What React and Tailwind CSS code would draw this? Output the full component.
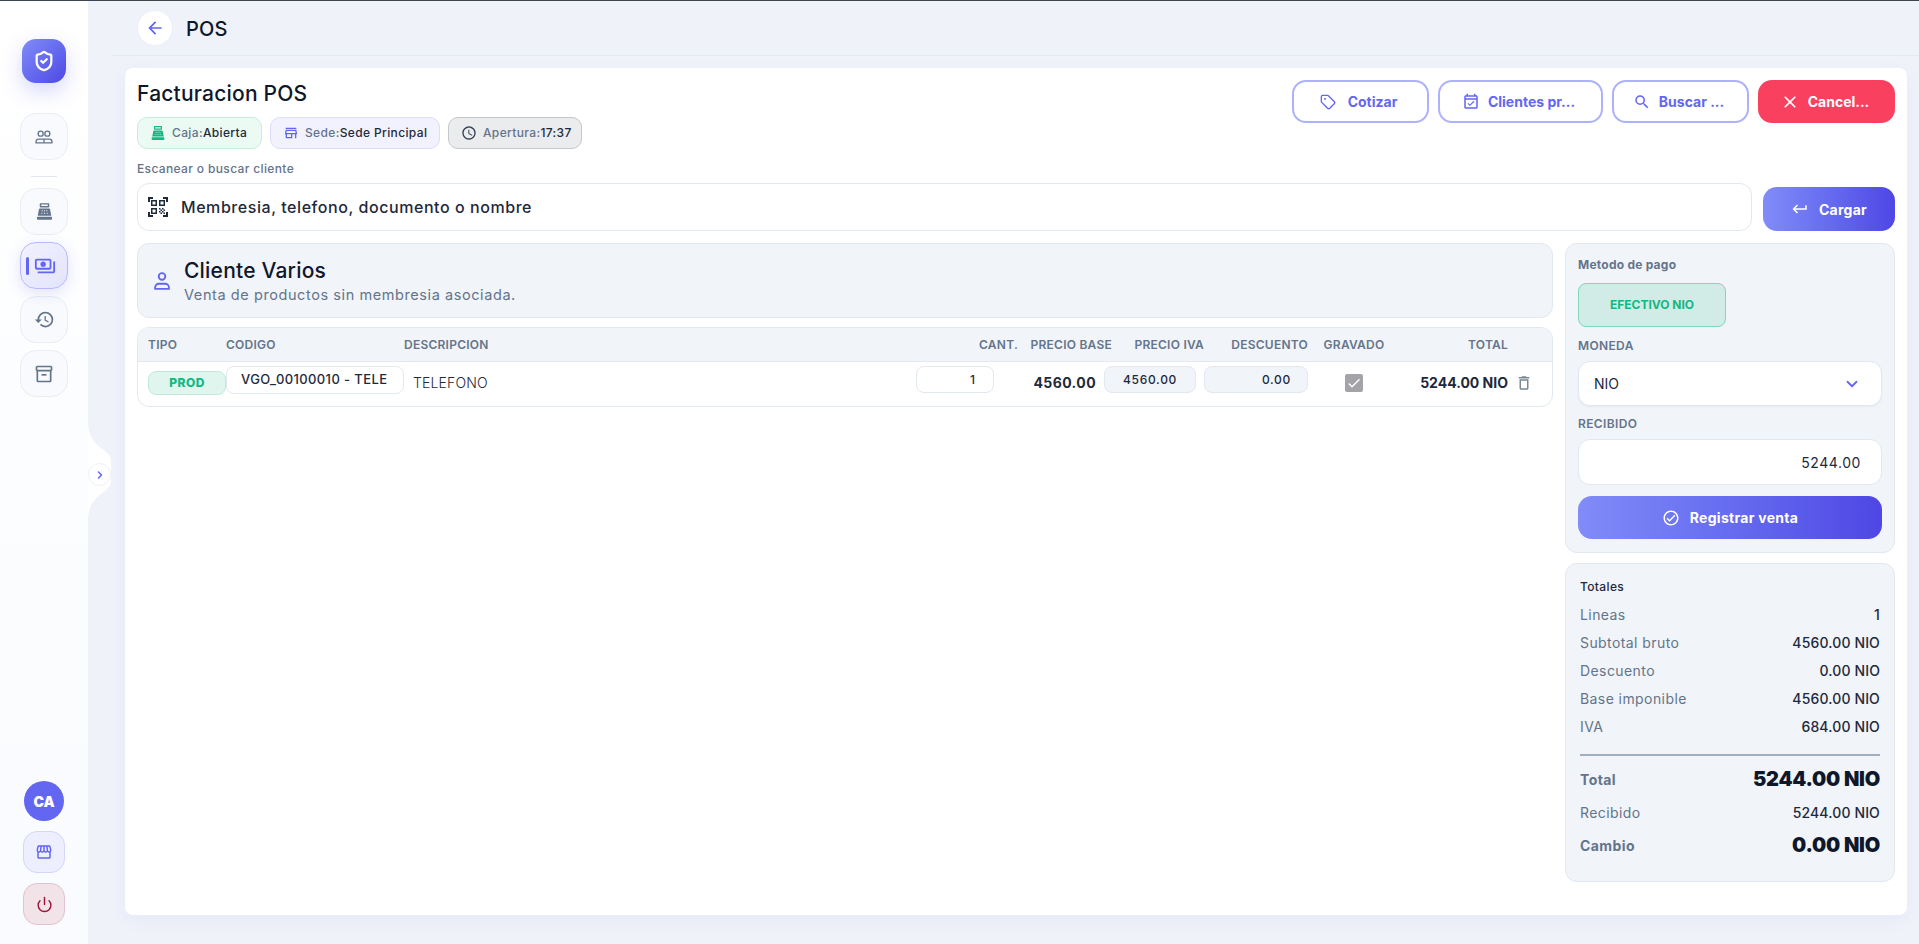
import React from 'react';
import {
  MdOutlinePayments, MdHistory, MdOutlineStorefront, MdOutlineQrCodeScanner, MdOutlineSchedule,
  MdOutlineEventAvailable, MdSearch, MdClose, MdKeyboardReturn, MdOutlineCheckCircleOutline,
  MdOutlineDelete, MdOutlineInventory2, MdOutlineStore, MdCheck, MdArrowBack,
} from 'react-icons/md';
import { LuChevronRight, LuChevronDown, LuPower, LuShieldCheck, LuTag } from 'react-icons/lu';

const UsersIcon = ({ className }) => (
  <svg viewBox="0 0 24 24" fill="none" stroke="currentColor" strokeWidth="1.6" className={className}>
    <circle cx="8" cy="8" r="3" />
    <circle cx="16" cy="8" r="3" />
    <path d="M2.5 19v-1.5a3 3 0 0 1 3-3h13a3 3 0 0 1 3 3V19z" />
    <path d="M12 14.5V19" />
  </svg>
);

const PersonIcon = ({ className }) => (
  <svg viewBox="0 0 24 24" fill="none" stroke="currentColor" strokeWidth="2" className={className}>
    <circle cx="12" cy="7" r="3.6" />
    <path d="M4.5 20.5v-1.5a4 4 0 0 1 4-4h7a4 4 0 0 1 4 4v1.5z" />
  </svg>
);

// cash register, filled body with small display on top
const RegisterIcon = ({ className }) => (
  <svg viewBox="0 0 24 24" fill="currentColor" className={className}>
    <path d="M7 1.5h10a1 1 0 0 1 1 1V6a1 1 0 0 1-1 1H7a1 1 0 0 1-1-1V2.5a1 1 0 0 1 1-1zm.8 1.8v1.9h8.4V3.3z" fillRule="evenodd" />
    <path fillRule="evenodd" d="M6 8.3h12a1 1 0 0 1 1 .8l1.6 8.2H3.4L5 9.100a1 1 0 0 1 1-.8zM8.500 10.500v1.300h1.300v-1.300zm2.900 0v1.300h1.300v-1.300zm2.900 0v1.300h1.300v-1.300zM8 13.500v1.300h1.300v-1.300zm3.300 0v1.300h1.400v-1.300zm3.400 0v1.300H16v-1.300z" />
    <rect x="2.500" y="18.500" width="19" height="4" rx="1" />
  </svg>
);

const navItem = "w-12 h-[47px] rounded-2xl border border-[#e9edf5] bg-[#f8fafd] flex items-center justify-center text-[#64748b]";

const Sidebar = () => (
  <aside className="relative z-10 w-[88px] shrink-0 bg-gradient-to-b from-white to-[#f9fbfe] flex flex-col items-center pt-[38px] pb-[19px]">
    <div className="w-11 h-11 rounded-[14px] bg-gradient-to-br from-[#818cf8] to-[#4f46e5] shadow-[0_8px_20px_rgba(99,102,241,0.25)] flex items-center justify-center text-white">
      <LuShieldCheck className="w-[22px] h-[22px]" strokeWidth={2.4} />
    </div>
    <div className={`${navItem} mt-[30px]`}><UsersIcon className="w-5 h-5" /></div>
    <div className="w-[26px] h-px bg-[#e2e8f0] mt-4 mb-[11px]" />
    <div className={navItem}><RegisterIcon className="w-[19px] h-[19px]" /></div>
    <div className="relative w-12 h-[47px] mt-[7px] rounded-2xl border border-[#b7b9fb] bg-gradient-to-br from-[#f1f1fe] to-[#e3e4fd] shadow-[0_4px_14px_rgba(99,102,241,0.18)] flex items-center justify-center text-[#6366f1]">
      <span className="absolute left-[5px] top-[14px] w-[3px] h-[18px] rounded bg-[#6366f1]" />
      <MdOutlinePayments className="w-[22px] h-[22px] ml-[1px]" />
    </div>
    <div className={`${navItem} mt-[7px]`}><MdHistory className="w-[21px] h-[21px]" /></div>
    <div className={`${navItem} mt-[7px]`}><MdOutlineInventory2 className="w-[20px] h-[20px]" /></div>
    <div className="mt-auto w-10 h-10 rounded-full bg-[#6366f1] text-white text-[14px] font-black flex items-center justify-center">CA</div>
    <div className="mt-[10px] w-[42px] h-[42px] rounded-[14px] border border-[#d5d6fb] bg-[#eeeffe] flex items-center justify-center text-[#6366f1]">
      <MdOutlineStorefront className="w-[18px] h-[18px]" />
    </div>
    <div className="mt-[10px] w-[42px] h-[42px] rounded-[14px] border border-[#e2c4cf] bg-[#f1e3e8] flex items-center justify-center text-[#9f1239]">
      <LuPower className="w-[17px] h-[17px]" />
    </div>
    {/* notch toggle */}
    <svg viewBox="0 0 24 100" className="absolute left-[88px] top-[420px] w-6 h-[100px]" fill="#fff">
      <path d="M0 0 C0 14 6 22 13 27 C20 32 23 35 23 40 V60 C23 65 20 68 13 73 C6 78 0 86 0 100z" />
    </svg>
    <div className="absolute left-[88px] top-[462px] w-[23px] h-[23px] rounded-full border border-[#eef0fb] bg-white flex items-center justify-center text-[#6366f1]">
      <LuChevronRight className="w-3 h-3" strokeWidth={3} />
    </div>
  </aside>
);

const Badge = ({ icon, label, value, className }) => (
  <div className={`h-8 pl-3 rounded-[10px] border flex items-center gap-[6px] text-[12px] font-medium tracking-[0.03em] ${className}`}>
    {icon}
    <span className="whitespace-nowrap"><span className="text-[#64748b]">{label}:</span><span className="text-[#1e293b]">{value}</span></span>
  </div>
);

const OutlineBtn = ({ icon, children, className }) => (
  <button className={`h-[43px] pr-1 rounded-[14px] border-2 border-[#aeb1fb] bg-white text-[#6366f1] text-[14px] font-bold flex items-center justify-center gap-2 ${className}`}>
    {icon}{children}
  </button>
);

const headCls = "text-[12px] font-semibold text-[#64748b] tracking-[0.02em]";
const tableCols = "grid grid-cols-[78px_178px_1fr_102px_94px_92px_104px_92px_108px_44px]";

const Totals = ({ label, value }) => (
  <div className="h-7 flex items-center justify-between text-[14px]">
    <span className="text-[#64748b] tracking-[0.03em]">{label}</span>
    <span className="text-[#1e293b] font-medium tracking-[0.01em]">{value}</span>
  </div>
);

const App = () => (
  <div className="h-[944px] w-full overflow-hidden flex bg-[#eff2f9] border-t border-t-[#3f4650] font-['Inter',sans-serif] text-[#0f172a]">
    <Sidebar />
    <main className="flex-1 min-w-0 pr-3 pl-[24px] relative">
      <header className="-mr-3 h-[55px] border-b border-[#e2e8f0] flex items-center pl-[25px]">
        <div className="w-9 h-9 rounded-full bg-white border border-[#eef0f6] flex items-center justify-center text-[#6366f1]">
          <MdArrowBack className="w-5 h-5" />
        </div>
        <h1 className="ml-[13px] pt-px text-[20px] font-medium tracking-[0.01em]">POS</h1>
      </header>

      <section className="mt-[12px] ml-[13px] h-[847px] rounded-lg bg-white shadow-[0_6px_18px_rgba(99,102,241,0.06)] px-3 pt-3">
        {/* top row */}
        <div className="flex justify-between">
          <div>
            <h2 className="mt-[1px] text-[21px] font-medium leading-[26px] tracking-[0.01em] text-[#0f172a]">Facturacion POS</h2>
            <div className="flex gap-2 mt-[10px]">
              <Badge className="w-[125px] border-[#c5eedd] bg-[#ecfaf4]" label="Caja" value="Abierta" icon={<RegisterIcon className="shrink-0 w-[16px] h-[16px] text-[#10b981]" />} />
              <Badge className="w-[170px] border-[#dcdcfb] bg-[#f2f2fe]" label="Sede" value="Sede Principal" icon={<MdOutlineStore className="shrink-0 w-4 h-4 text-[#6366f1]" />} />
              <Badge className="w-[134px] border-[#c4c7cc] bg-[#ebecee]" label="Apertura" value="17:37" icon={<MdOutlineSchedule className="shrink-0 w-4 h-4 text-[#334155]" />} />
            </div>
          </div>
          <div className="flex gap-[9px]">
            <OutlineBtn className="w-[137px]" icon={<LuTag className="w-4 h-4 mr-1" />}>Cotizar</OutlineBtn>
            <OutlineBtn className="w-[165px]" icon={<MdOutlineEventAvailable className="w-[18px] h-[18px]" />}>Clientes pr...</OutlineBtn>
            <OutlineBtn className="w-[137px]" icon={<MdSearch className="w-[18px] h-[18px]" />}>Buscar ...</OutlineBtn>
            <button className="w-[137px] h-[43px] pr-1 rounded-[14px] bg-[#f9415f] text-white text-[14px] font-bold flex items-center justify-center gap-2">
              <MdClose className="w-5 h-5" />Cancel...
            </button>
          </div>
        </div>

        <div className="mt-[12px] text-[12px] font-medium leading-4 text-[#64748b] tracking-[0.03em]">Escanear o buscar cliente</div>
        <div className="flex gap-[11px] mt-[6px] items-end">
          <div className="flex-1 h-12 rounded-xl border border-[#e2e8f0] bg-white flex items-center pl-[8px]">
            <MdOutlineQrCodeScanner className="w-6 h-6 text-[#1e293b]" />
            <span className="ml-[11px] text-[16px] font-medium tracking-[0.035em] text-[#1e293b]">Membresia, telefono, documento o nombre</span>
          </div>
          <button className="w-[132px] h-11 rounded-[14px] bg-gradient-to-r from-[#818cf8] to-[#4f46e5] text-white text-[14px] font-bold tracking-[0.02em] flex items-center justify-center gap-[10px]">
            <MdKeyboardReturn className="w-[18px] h-[18px]" />Cargar
          </button>
        </div>

        <div className="flex gap-3 mt-3">
          {/* left column */}
          <div className="flex-1 min-w-0">
            <div className="h-[75px] rounded-xl border border-[#e2e8f0] bg-[#f1f4f9] flex items-center pl-[13px]">
              <PersonIcon className="w-[22px] h-[22px] text-[#6366f1]" />
              <div className="ml-[11px]">
                <div className="text-[21px] font-medium leading-[28px] tracking-[0.01em] text-[#0f172a]">Cliente Varios</div>
                <div className="text-[14.5px] leading-[20px] text-[#64748b] tracking-[0.04em]">Venta de productos sin membresia asociada.</div>
              </div>
            </div>

            <div className="mt-[9px] h-20 rounded-xl border border-[#e2e8f0] bg-white overflow-hidden">
              <div className={`h-[34px] bg-[#f1f4f9] border-b border-[#e2e8f0] pl-[10px] items-center ${tableCols}`}>
                <span className={headCls}>TIPO</span>
                <span className={headCls}>CODIGO</span>
                <span className={headCls}>DESCRIPCION</span>
                <span className={`${headCls} text-right`}>CANT.</span>
                <span className={`${headCls} text-right`}>PRECIO BASE</span>
                <span className={`${headCls} text-right`}>PRECIO IVA</span>
                <span className={`${headCls} text-right`}>DESCUENTO</span>
                <span className={`${headCls} text-center`}>GRAVADO</span>
                <span className={`${headCls} text-right`}>TOTAL</span>
                <span />
              </div>
              <div className={`pl-[10px] pt-[4px] items-start ${tableCols}`}>
                <div className="mt-[5px] h-6 rounded-lg border border-[#bfeadb] bg-[#e0f5ee] text-[#10b981] text-[12px] font-extrabold tracking-[0.04em] flex items-center justify-center">PROD</div>
                <div className="h-7 rounded-lg border border-[#e2e8f0] bg-white flex items-center pl-[14px] text-[13px] font-medium tracking-[0.03em] text-[#1e293b] whitespace-nowrap">VGO_00100010 - TELE</div>
                <div className="pl-[9px] mt-[7px] text-[14px] font-light leading-5 text-[#1e293b] tracking-[0.01em]">TELEFONO</div>
                <div className="w-[78px] h-[27px] rounded-lg border border-[#e2e8f0] bg-white flex items-center justify-end pr-[18px] text-[12px] font-medium text-[#1e293b]">1</div>
                <div className="mt-[7px] pr-4 text-right text-[14px] font-bold leading-5 tracking-[0.03em] text-[#1e293b]">4560.00</div>
                <div className="h-[27px] w-[92px] -ml-2 rounded-lg border border-[#e2e8f0] bg-[#f1f4f9] flex items-center justify-center text-[12px] font-medium tracking-[0.06em] text-[#1e293b]">4560.00</div>
                <div className="h-[27px] rounded-lg border border-[#e2e8f0] bg-[#f1f4f9] flex items-center justify-end pr-4 text-[12px] font-medium tracking-[0.06em] text-[#1e293b]">0.00</div>
                <div className="flex justify-center mt-[8px]">
                  <span className="w-[18px] h-[18px] rounded-[2px] bg-[#a3a3a8] flex items-center justify-center text-white"><MdCheck className="w-4 h-4" /></span>
                </div>
                <div className="mt-[7px] text-right text-[14px] font-bold leading-5 text-[#1e293b] whitespace-nowrap">5244.00 NIO</div>
                <div className="mt-[8px] pl-[7px] text-[#7b8794]"><MdOutlineDelete className="w-[18px] h-[18px]" /></div>
              </div>
            </div>
          </div>

          {/* right column */}
          <div className="w-[330px] shrink-0">
            <div className="h-[310px] rounded-xl border border-[#e2e8f0] bg-[#f1f4f9] pt-[12px] px-3">
              <div className="text-[12px] font-bold leading-[18px] text-[#64748b] tracking-[0.02em]">Metodo de pago</div>
              <div className="mt-[9px] w-[148px] h-11 rounded-lg border border-[#7fd8b8] bg-[#d1ebe6] flex items-center justify-center text-[#10b981] text-[12px] font-bold">EFECTIVO NIO</div>
              <div className="mt-[10px] text-[12px] font-semibold leading-[18px] text-[#64748b] tracking-[0.03em]">MONEDA</div>
              <div className="mt-[6px] h-[45px] rounded-xl border border-[#e2e8f0] bg-white shadow-[0_1px_2px_rgba(15,23,42,0.05)] flex items-center justify-between pl-[15px] pr-[20px]">
                <span className="text-[14px] text-[#1e293b]">NIO</span>
                <LuChevronDown className="w-[18px] h-[18px] text-[#6366f1]" strokeWidth={2.4} />
              </div>
              <div className="mt-[9px] text-[12px] font-semibold leading-[18px] text-[#64748b] tracking-[0.03em]">RECIBIDO</div>
              <div className="mt-[6px] h-[46px] rounded-xl border border-[#e2e8f0] bg-white flex items-center justify-end pr-[20px] text-[14px] text-[#1e293b] tracking-[0.04em]">5244.00</div>
              <button className="mt-[11px] w-full h-[43px] rounded-[14px] bg-gradient-to-r from-[#818cf8] to-[#4f46e5] text-white text-[14px] font-bold tracking-[0.02em] flex items-center justify-center gap-[10px]">
                <MdOutlineCheckCircleOutline className="w-[18px] h-[18px]" />Registrar venta
              </button>
            </div>
            <div className="mt-[10px] h-[319px] rounded-xl border border-[#e2e8f0] bg-[#f1f4f9] pt-[14px] px-[14px]">
              <div className="text-[12px] font-medium leading-[18px] text-[#1e293b] tracking-[0.03em] mb-[4px]">Totales</div>
              <Totals label="Lineas" value="1" />
              <Totals label="Subtotal bruto" value="4560.00 NIO" />
              <Totals label="Descuento" value="0.00 NIO" />
              <Totals label="Base imponible" value="4560.00 NIO" />
              <Totals label="IVA" value="684.00 NIO" />
              <div className="h-0.5 bg-[#a3aec0] mt-[14px]" />
              <div className="h-[36px] mt-[5px] flex items-center justify-between">
                <span className="text-[14px] font-bold text-[#64748b] tracking-[0.03em]">Total</span>
                <span className="text-[20px] font-black text-[#0f172a] tracking-[-0.01em]">5244.00 NIO</span>
              </div>
              <div className="h-7 mt-[1px]"><Totals label="Recibido" value="5244.00 NIO" /></div>
              <div className="h-[36px] mt-[1px] flex items-center justify-between">
                <span className="text-[14px] font-bold text-[#64748b] tracking-[0.03em]">Cambio</span>
                <span className="text-[20px] font-black text-[#0f172a] tracking-[-0.01em]">0.00 NIO</span>
              </div>
            </div>
          </div>
        </div>
      </section>
    </main>
  </div>
);

export default App;
